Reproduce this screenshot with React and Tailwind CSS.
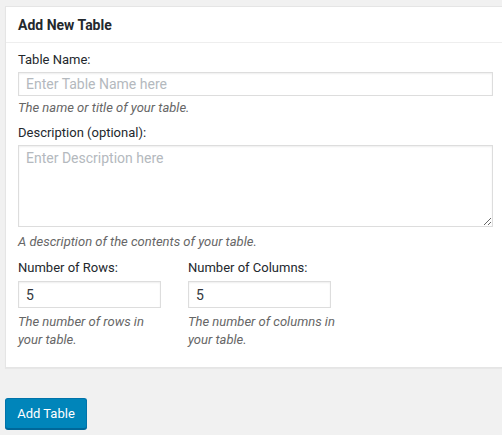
export default function App() {
  return (
    <div className="w-full min-h-[435px] overflow-hidden bg-[#f1f1f1] pl-[5px] pt-[6px] font-['Roboto',sans-serif] text-[13px] text-[#23282d]">
      {/* Panel */}
      <div className="w-[520px] bg-white border border-[#e5e5e5] shadow-[0_1px_1px_rgba(0,0,0,0.04)]">
        <div className="h-[36px] flex items-center px-[12px] border-b border-[#eeeeee]">
          <h2 className="text-[14px] font-bold leading-none m-0">Add New Table</h2>
        </div>

        <div className="pl-[12px] pt-[8px] pb-[18px]">
          <label className="block leading-[18px]">Table Name:</label>
          <input
            type="text"
            placeholder="Enter Table Name here"
            className="mt-[3px] block w-[475px] h-[24px] px-[7px] border border-[#dddddd] shadow-[inset_0_1px_2px_rgba(0,0,0,0.07)] text-[14px] placeholder:text-[#b4b9be] outline-none"
          />
          <p className="mt-[3px] italic text-[#666666] leading-[18px]">The name or title of your table.</p>

          <label className="block mt-[7px] leading-[18px]">Description (optional):</label>
          <textarea
            placeholder="Enter Description here"
            className="mt-[3px] block w-[475px] h-[82px] px-[7px] py-[2px] border border-[#dddddd] shadow-[inset_0_1px_2px_rgba(0,0,0,0.07)] text-[14px] leading-[20px] placeholder:text-[#b4b9be] outline-none"
          />
          <p className="mt-[6px] italic text-[#666666] leading-[18px]">A description of the contents of your table.</p>

          <div className="mt-[8px] flex gap-[20px]">
            <div className="w-[150px]">
              <label className="block leading-[18px]">Number of Rows:</label>
              <input
                type="text"
                defaultValue="5"
                className="mt-[4px] block w-[143px] h-[27px] px-[7px] border border-[#dddddd] shadow-[inset_0_1px_2px_rgba(0,0,0,0.07)] text-[14px] text-[#32373c] outline-none"
              />
              <p className="mt-[5px] italic text-[#666666] leading-[18px]">The number of rows in your table.</p>
            </div>
            <div className="w-[150px]">
              <label className="block leading-[18px]">Number of Columns:</label>
              <input
                type="text"
                defaultValue="5"
                className="mt-[4px] block w-[143px] h-[27px] px-[7px] border border-[#dddddd] shadow-[inset_0_1px_2px_rgba(0,0,0,0.07)] text-[14px] text-[#32373c] outline-none"
              />
              <p className="mt-[5px] italic text-[#666666] leading-[18px]">The number of columns in your table.</p>
            </div>
          </div>
        </div>
      </div>

      <button className="mt-[30px] w-[82px] h-[31px] rounded-[3px] bg-[#0085ba] border border-[#0073aa] border-b-[#006799] shadow-[0_1px_0_#006799] text-white text-[13px] leading-none">
        Add Table
      </button>
    </div>
  );
}
